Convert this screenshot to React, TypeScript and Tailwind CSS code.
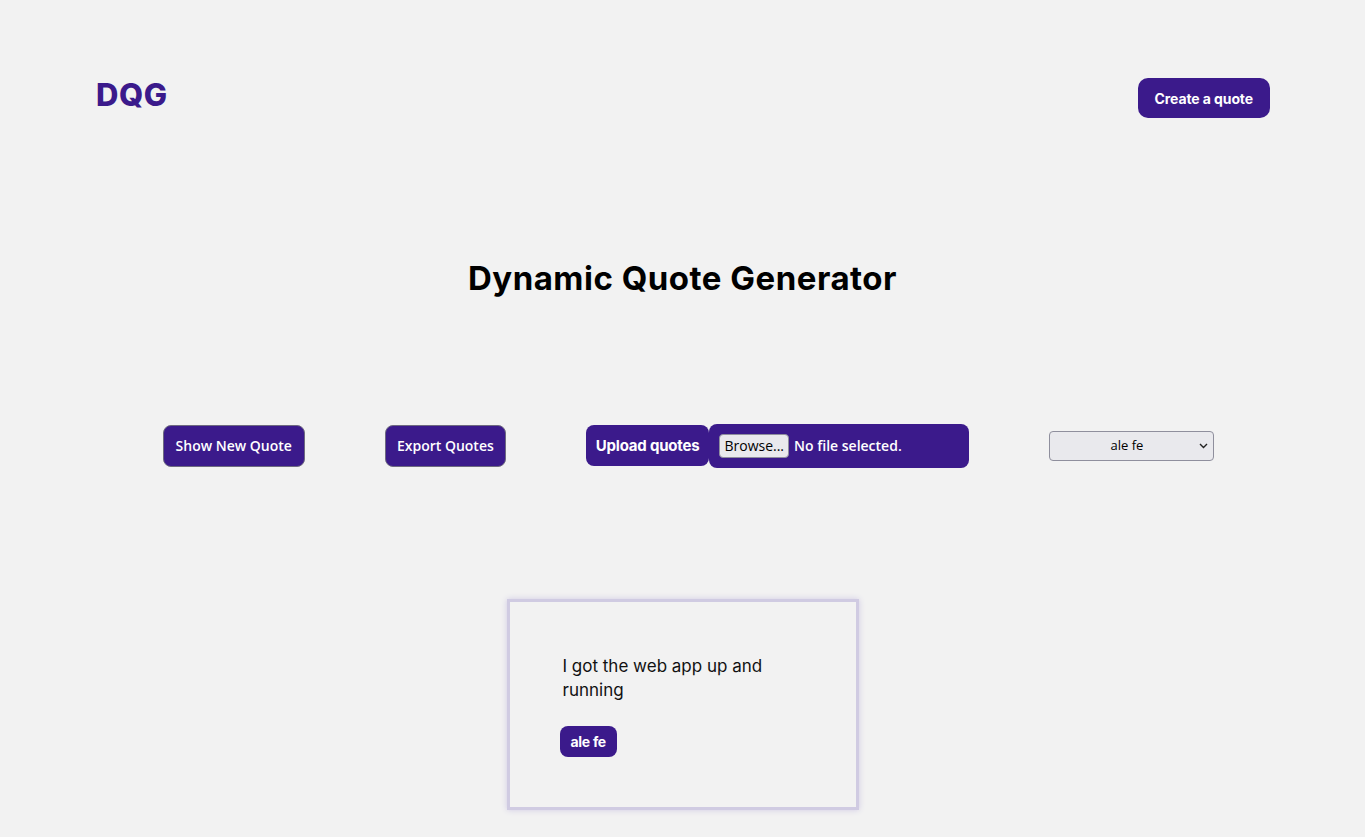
export default function App() {
  const poppins = { fontFamily: "Inter, 'Noto Sans', sans-serif" };
  return (
    <main className="min-h-screen bg-[#f2f2f2] text-black" style={poppins}>
      <header className="flex items-center justify-between pl-[96px] pr-[95px] pt-[78px]">
        <h2 className="-mt-[6px] text-[31px] font-extrabold tracking-[0.5px] text-[#3b1a8b]">DQG</h2>
        <button className="h-[40px] rounded-[10px] bg-[#3b1a8b] px-[17px] text-[14px] font-bold tracking-[-0.1px] text-white">
          Create a quote
        </button>
      </header>

      <h1 className="mt-[139px] text-center text-[33px] leading-[40px] font-bold tracking-[0.5px]">Dynamic Quote Generator</h1>

      <section className="mt-[126px] flex items-center justify-center gap-[80px] pl-[12px]">
        <button className="h-[42px] rounded-[8px] border border-[#6e6a80] bg-[#3b1a8b] px-[12px] text-[14px] font-semibold text-white" style={{ fontFamily: "'Open Sans', sans-serif" }}>
          Show New Quote
        </button>
        <button className="h-[42px] rounded-[8px] border border-[#6e6a80] bg-[#3b1a8b] px-[11px] text-[14px] font-semibold text-white" style={{ fontFamily: "'Open Sans', sans-serif" }}>
          Export Quotes
        </button>
        <div className="flex items-center">
          <label className="flex h-[41px] items-center rounded-[8px] bg-[#3b1a8b] px-[10px] pt-[1px] text-[15px] leading-[20px] font-bold tracking-[-0.2px] text-white">
            Upload quotes
          </label>
          <div className="flex h-[44px] w-[260px] items-center gap-[5px] rounded-[8px] bg-[#3b1a8b] pl-[10px] text-[14px] font-semibold text-white" style={{ fontFamily: "'Open Sans', sans-serif" }}>
            <span className="flex h-[24px] items-center rounded-[4px] border border-[#8f8f9d] bg-[#e9e9ed] px-[4px] text-[14px] font-normal text-black">
              Browse...
            </span>
            <span>No file selected.</span>
          </div>
        </div>
        <div className="relative flex h-[30px] w-[165px] items-center justify-center rounded-[4px] border border-[#8f8f9d] bg-[#e9e9ed] text-[13px] text-black" style={{ fontFamily: "'Open Sans', sans-serif" }}>
          <span className="pr-[10px]">ale fe</span>
          <svg className="absolute right-[5px] top-[10px]" width="9" height="7" viewBox="0 0 9 7" fill="none">
            <path d="M1 2l3.5 3.5L8 2" stroke="#222" strokeWidth="1.4" />
          </svg>
        </div>
      </section>

      <section className="mt-[131px] flex justify-center pb-[28px]">
        <div className="h-[211px] w-[352px] border-[3px] border-[#d0cbe2] bg-[#f2f2f2] pl-[53px] pt-[52px] shadow-[0_0_6px_#cfc9e4]">
          <p className="max-w-[215px] text-[17px] leading-[24px] text-[#111]">I got the web app up and running</p>
          <span className="-ml-[3px] mt-[24px] inline-flex h-[31px] items-center rounded-[8px] bg-[#3b1a8b] px-[11px] text-[14px] font-bold tracking-[-0.3px] text-white">
            ale fe
          </span>
        </div>
      </section>
    </main>
  );
}
